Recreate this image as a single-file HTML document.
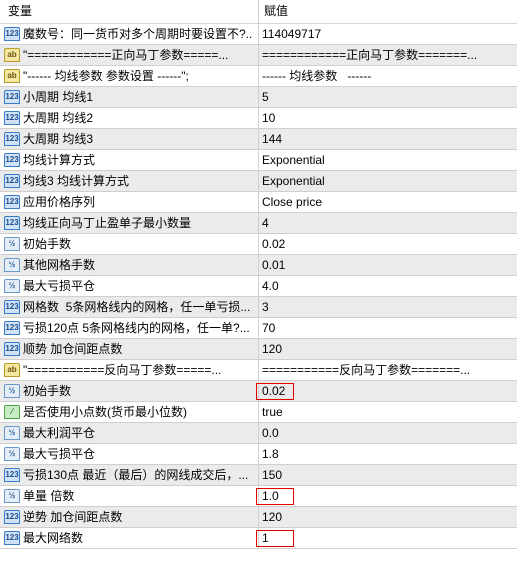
<!DOCTYPE html>
<html><head><meta charset="utf-8"><style>
*{margin:0;padding:0;box-sizing:border-box}
body{width:517px;height:564px;background:#fff;font-family:"Liberation Sans","Noto Sans CJK SC",sans-serif;font-size:12px;color:#000;overflow:hidden;position:relative}
.hdr{height:24px;position:relative;border-bottom:1px solid #d6d6d6}
.hdr span{position:absolute;top:4px;font-size:12px;line-height:15px}
.row{height:21px;position:relative;border-bottom:1px solid #cfcfcf}
.row.g{background:#ebebeb}
.n{position:absolute;left:23px;top:2px;width:233px;white-space:nowrap;overflow:hidden;line-height:16px;height:17px}
.v{position:absolute;left:262px;top:2px;width:252px;white-space:nowrap;overflow:hidden;line-height:16px;height:17px}
.vl{position:absolute;left:258px;top:0;width:1px;height:549px;background:#d0d0d0}
.ic{position:absolute;left:4px;top:3px;width:16px;height:14px;border-radius:2px 2px 0 0;font-size:8px;font-weight:bold;text-align:center;line-height:12px}
.i1{background:#cfe2f6;border:1px solid #3a7bc8;color:#1d4f91}
.i2{background:#f4e7a0;border:1px solid #b89a2a;color:#6b5510}
.i3{background:#e3eef9;border:1px solid #6b97c9;color:#2a5d96}
.i4{background:#c9ebc4;border:1px solid #4aa64a;color:#2a7a2a}
.red{position:absolute;width:38px;height:17px;border:1px solid #e00000;left:256px;z-index:5}
</style></head><body>
<div class="hdr"><span style="left:8px">变量</span><span style="left:264px">赋值</span></div>
<div class="row"><div class="ic i1">123</div><div class="n">魔数号：同一货币对多个周期时要设置不?..</div><div class="v">114049717</div></div>
<div class="row g"><div class="ic i2">ab</div><div class="n">"============正向马丁参数=====...</div><div class="v">============正向马丁参数=======...</div></div>
<div class="row"><div class="ic i2">ab</div><div class="n">"------ 均线参数 参数设置 ------";</div><div class="v">------ 均线参数 &nbsp; ------</div></div>
<div class="row g"><div class="ic i1">123</div><div class="n">小周期 均线1</div><div class="v">5</div></div>
<div class="row"><div class="ic i1">123</div><div class="n">大周期 均线2</div><div class="v">10</div></div>
<div class="row g"><div class="ic i1">123</div><div class="n">大周期 均线3</div><div class="v">144</div></div>
<div class="row"><div class="ic i1">123</div><div class="n">均线计算方式</div><div class="v">Exponential</div></div>
<div class="row g"><div class="ic i1">123</div><div class="n">均线3 均线计算方式</div><div class="v">Exponential</div></div>
<div class="row"><div class="ic i1">123</div><div class="n">应用价格序列</div><div class="v">Close price</div></div>
<div class="row g"><div class="ic i1">123</div><div class="n">均线正向马丁止盈单子最小数量</div><div class="v">4</div></div>
<div class="row"><div class="ic i3">½</div><div class="n">初始手数</div><div class="v">0.02</div></div>
<div class="row g"><div class="ic i3">½</div><div class="n">其他网格手数</div><div class="v">0.01</div></div>
<div class="row"><div class="ic i3">½</div><div class="n">最大亏损平仓</div><div class="v">4.0</div></div>
<div class="row g"><div class="ic i1">123</div><div class="n">网格数 &nbsp;5条网格线内的网格，任一单亏损...</div><div class="v">3</div></div>
<div class="row"><div class="ic i1">123</div><div class="n">亏损120点 5条网格线内的网格，任一单?...</div><div class="v">70</div></div>
<div class="row g"><div class="ic i1">123</div><div class="n">顺势 加仓间距点数</div><div class="v">120</div></div>
<div class="row"><div class="ic i2">ab</div><div class="n">"===========反向马丁参数=====...</div><div class="v">===========反向马丁参数=======...</div></div>
<div class="row g"><div class="ic i3">½</div><div class="n">初始手数</div><div class="v">0.02</div></div>
<div class="row"><div class="ic i4">⁄</div><div class="n">是否使用小点数(货币最小位数)</div><div class="v">true</div></div>
<div class="row g"><div class="ic i3">½</div><div class="n">最大利润平仓</div><div class="v">0.0</div></div>
<div class="row"><div class="ic i3">½</div><div class="n">最大亏损平仓</div><div class="v">1.8</div></div>
<div class="row g"><div class="ic i1">123</div><div class="n">亏损130点 最近（最后）的网线成交后，...</div><div class="v">150</div></div>
<div class="row"><div class="ic i3">½</div><div class="n">单量 倍数</div><div class="v">1.0</div></div>
<div class="row g"><div class="ic i1">123</div><div class="n">逆势 加仓间距点数</div><div class="v">120</div></div>
<div class="row"><div class="ic i1">123</div><div class="n">最大网络数</div><div class="v">1</div></div>
<div class="vl"></div>
<div class="red" style="top:383px"></div>
<div class="red" style="top:488px"></div>
<div class="red" style="top:530px"></div>
</body></html>
